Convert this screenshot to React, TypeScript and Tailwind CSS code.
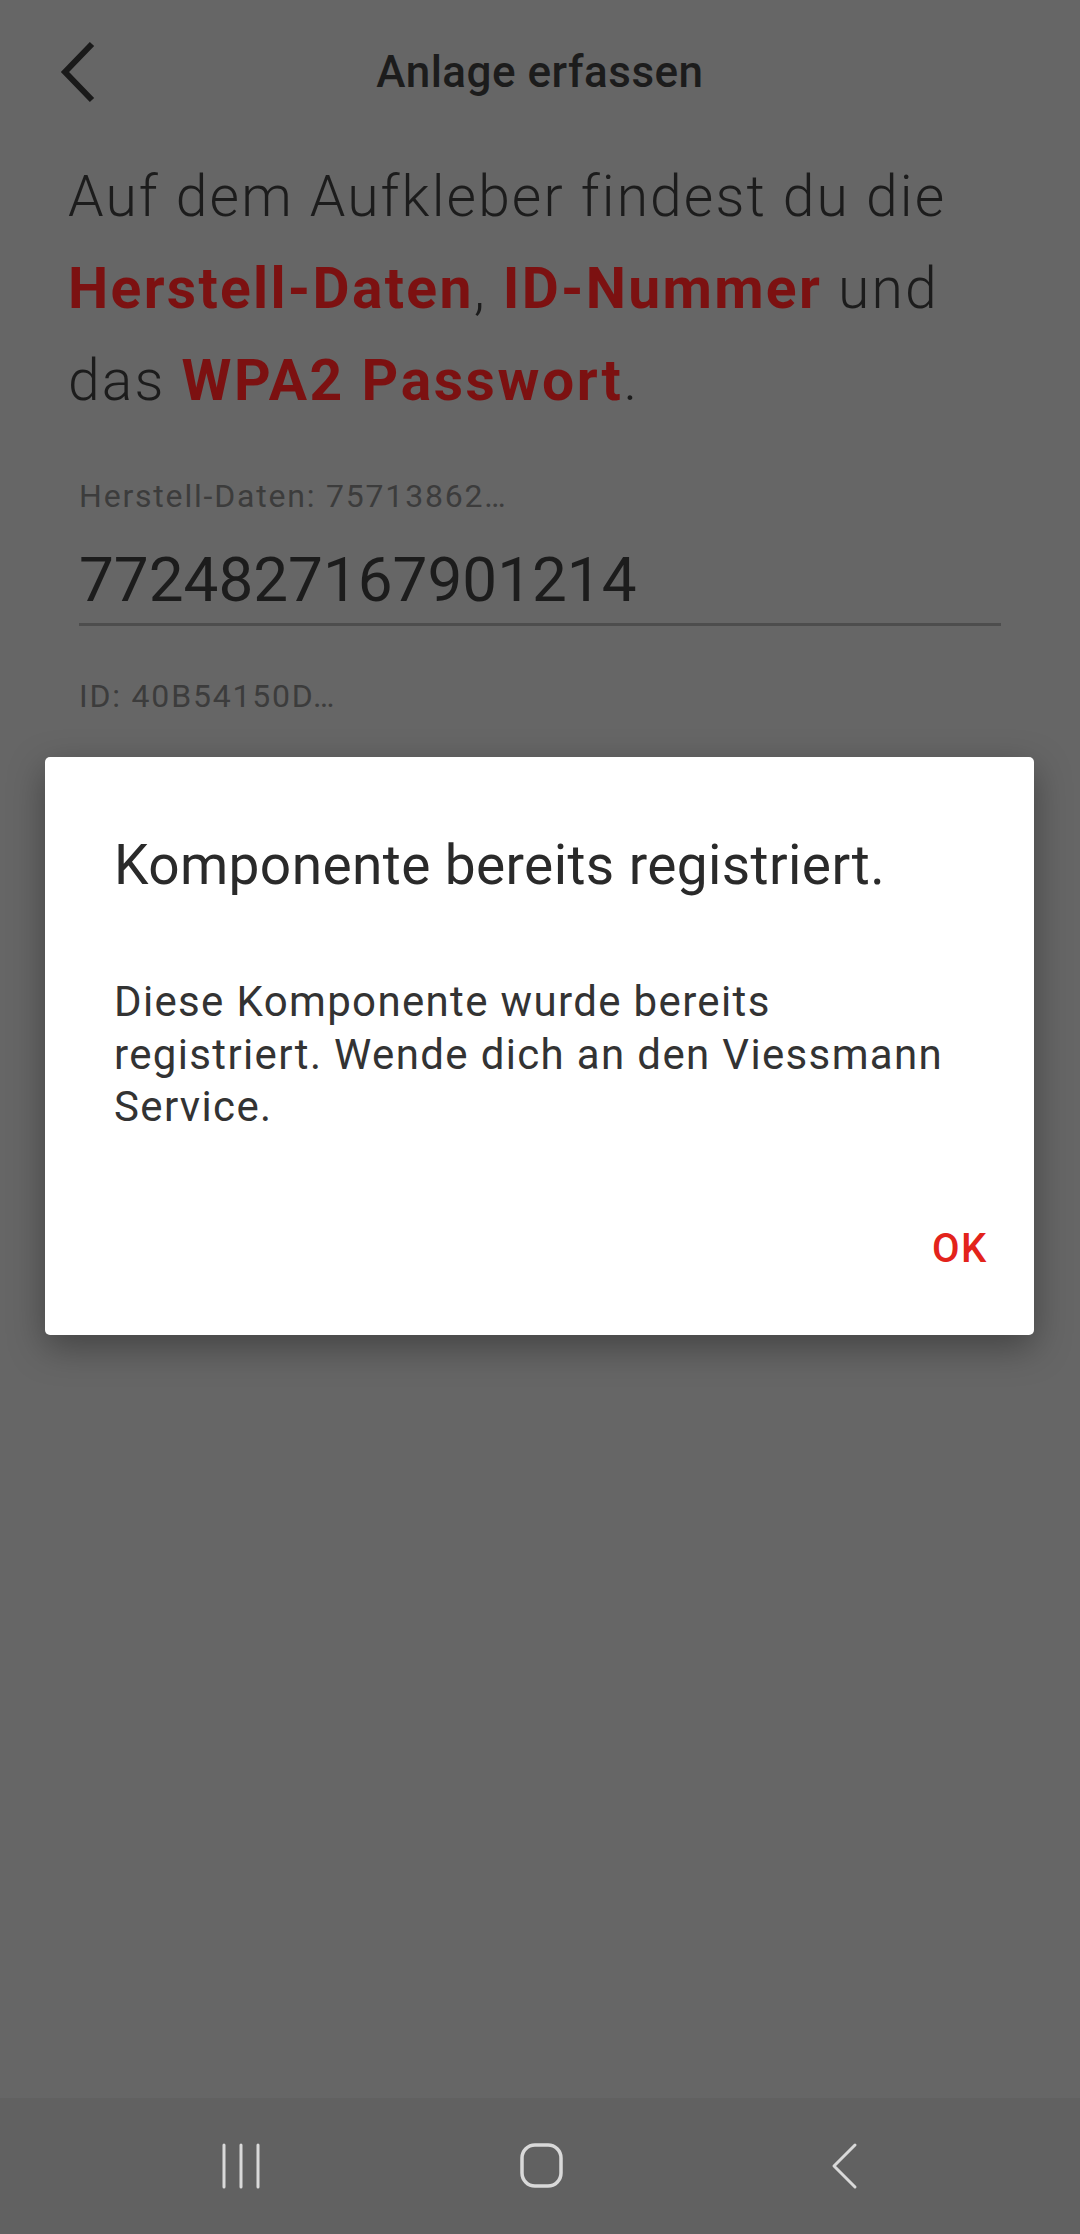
import React from 'react';

const BackIcon: React.FC = () => (
  <svg width="40" height="64" viewBox="0 0 40 64" className="absolute left-[57px] top-[40px]">
    <path d="M35 4 L8 32 L35 60" fill="none" stroke="#1a1a1a" strokeWidth="6" />
  </svg>
);

const NavBar: React.FC = () => (
  <div className="mt-auto h-[136px] bg-[#616161] flex items-center pl-[221px]">
    {/* recent apps */}
    <svg width="40" height="46" viewBox="0 0 40 46">
      <g stroke="#d9d9d9" strokeWidth="3" strokeLinecap="round">
        <line x1="3" y1="2" x2="3" y2="44" />
        <line x1="20" y1="2" x2="20" y2="44" />
        <line x1="37" y1="2" x2="37" y2="44" />
      </g>
    </svg>
    {/* home */}
    <svg width="46" height="48" viewBox="0 0 46 48" className="ml-[258px]">
      <rect x="3" y="3" width="39" height="41" rx="13" fill="none" stroke="#d9d9d9" strokeWidth="3.5" />
    </svg>
    {/* back */}
    <svg width="30" height="48" viewBox="0 0 30 48" className="ml-[265px]">
      <path d="M25 3 L4 24 L25 45" fill="none" stroke="#d9d9d9" strokeWidth="3" strokeLinecap="round" strokeLinejoin="round" />
    </svg>
  </div>
);

export default function App() {
  return (
    <div
      className="relative w-[1080px] h-[2234px] bg-[#666666] flex flex-col overflow-hidden"
      style={{ fontFamily: 'Roboto, "Noto Sans", sans-serif' }}
    >
      {/* Toolbar */}
      <div className="relative h-[144px] flex items-center justify-center">
        <BackIcon />
        <span className="text-[44px] font-medium tracking-[0.5px] text-[#1c1c1c]">Anlage erfassen</span>
      </div>

      {/* Intro */}
      <p className="mt-[7px] pl-[68px] pr-[20px] text-[57px] leading-[92px] font-light tracking-[2.1px] whitespace-nowrap text-[#1c1c1c]">
        Auf dem Aufkleber findest du die
        <br />
        <span className="font-bold tracking-[2.3px] text-[#7c1111]">Herstell-Daten</span>,{' '}
        <span className="font-bold tracking-[2.3px] text-[#7c1111]">ID-Nummer</span> und
        <br />
        das <span className="font-bold tracking-[2.6px] text-[#7c1111]">WPA2 Passwort</span>.
      </p>

      {/* Fields */}
      <div className="px-[79px] flex flex-col">
        <label className="mt-[49px] text-[32px] leading-[40px] tracking-[1.8px] text-[#3c3c3c]">Herstell-Daten: 75713862…</label>
        <div className="mt-[27px] text-[62px] leading-[74px] text-[#1c1c1c]">7724827167901214</div>
        <div className="mt-[6px] h-[3px] bg-[#4d4d4d]" />

        <label className="mt-[50px] text-[32px] leading-[40px] tracking-[1.8px] text-[#3c3c3c]">ID: 40B54150D…</label>
        <div className="mt-[44px] text-[62px] leading-[74px] text-[#1c1c1c]">Ka3dQv7nLfZw2mP</div>
        <div className="mt-[6px] h-[3px] bg-[#4d4d4d]" />
      </div>

      {/* Dialog */}
      <div className="absolute left-[45px] top-[757px] w-[989px] h-[578px] bg-white rounded-[5px] shadow-[0_12px_36px_rgba(0,0,0,0.35)] flex flex-col pl-[69px] pr-[46px]">
        <h2 className="pt-[76px] text-[55px] leading-[64px] font-normal tracking-[0.4px] text-[#2a2a2a]">
          Komponente bereits registriert.
        </h2>
        <p className="mt-[79px] text-[42px] leading-[52.5px] tracking-[1.35px] text-[#333333]">
          Diese Komponente wurde bereits
          <br />
          registriert. Wende dich an den Viessmann
          <br />
          Service.
        </p>
        <div className="mt-[91px] flex justify-end">
          <button className="text-[40px] leading-[48px] font-medium tracking-[0.04em] text-[#e3231b]">OK</button>
        </div>
      </div>

      <NavBar />
    </div>
  );
}
